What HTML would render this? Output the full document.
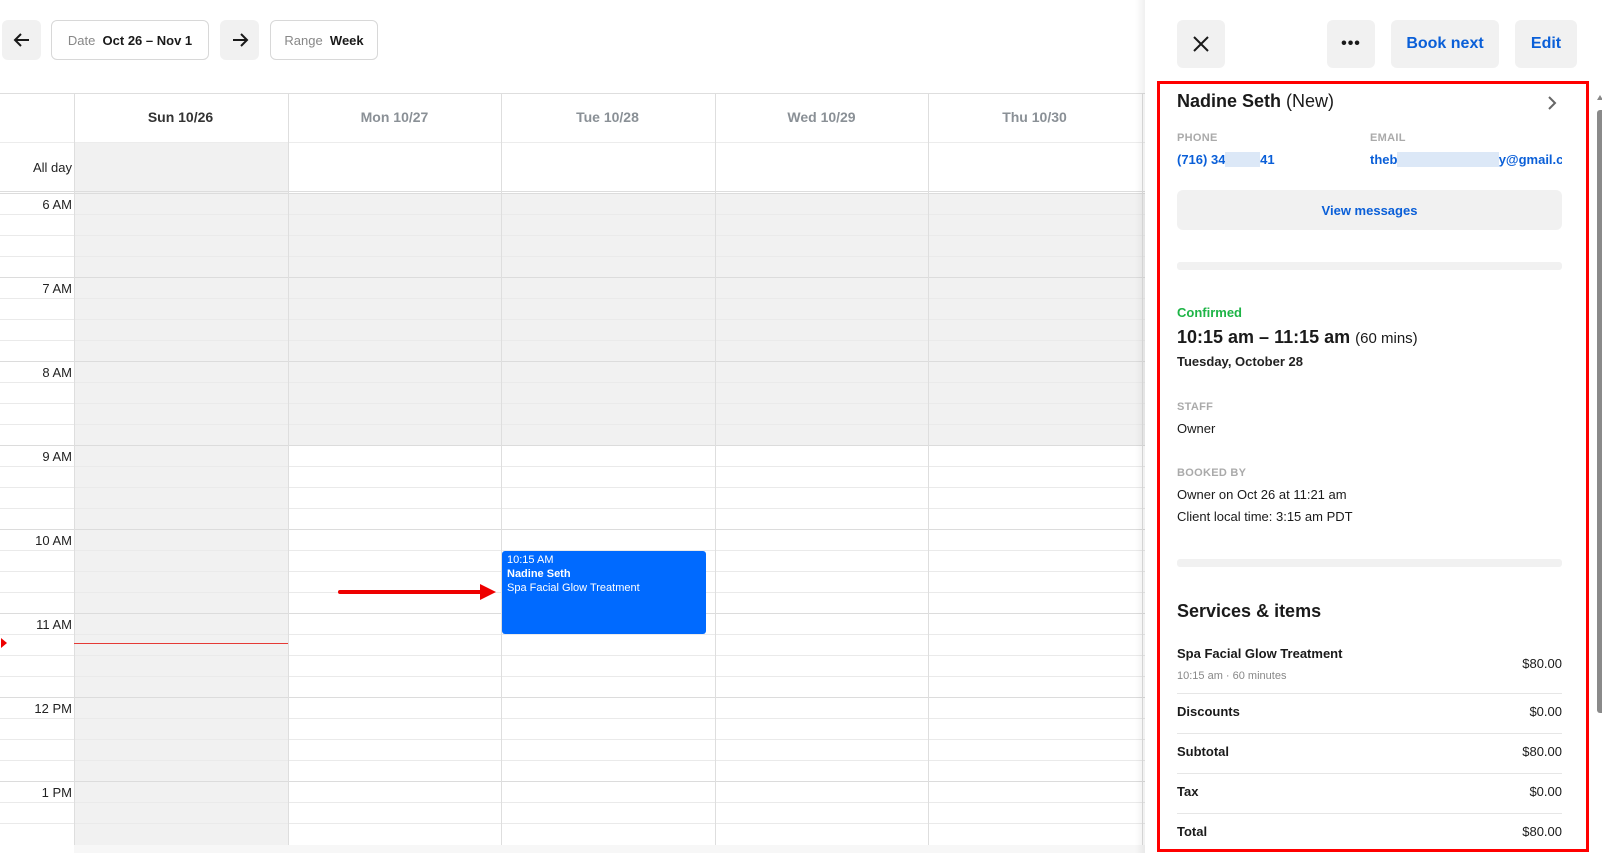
<!DOCTYPE html>
<html><head><meta charset="utf-8">
<style>
*{box-sizing:border-box;margin:0;padding:0}
body{width:1602px;height:853px;overflow:hidden;background:#fff;font-family:"Liberation Sans",Arial,sans-serif;color:#1a1a1a;position:relative}
.abs{position:absolute}
.btn{position:absolute;border-radius:6px;display:flex;align-items:center;justify-content:center}
.gray{background:#f1f1f1}
.outl{border:1px solid #d8d8d8;background:#fff;font-size:13px}
.hl{position:absolute;left:0;height:1px}
.vl{position:absolute;width:1px;background:#dedede}
.tl{position:absolute;right:1530px;font-size:13px;color:#222;text-align:right;width:70px}
.dh{position:absolute;top:93px;height:49px;line-height:49px;text-align:center;font-size:14px;font-weight:bold;color:#8a9096;width:213px}
.lab{position:absolute;left:1177px;font-size:11px;font-weight:bold;color:#aaa;letter-spacing:.3px}
.t13{position:absolute;left:1177px;font-size:13px;color:#1a1a1a}
.row{position:absolute;left:1177px;width:385px;font-size:13px;font-weight:bold;display:flex;justify-content:space-between}
.row span:last-child{font-weight:normal}
.div{position:absolute;left:1177px;width:385px;height:1px;background:#e6e6e6}
</style></head><body>

<!-- toolbar -->
<div class="btn gray" style="left:2px;top:20px;width:39px;height:40px">
<svg width="20" height="20" viewBox="0 0 20 20"><path d="M17 10H3M9 4L3 10l6 6" fill="none" stroke="#1a1a1a" stroke-width="2"/></svg></div>
<div class="btn outl" style="left:51px;top:20px;width:158px;height:40px"><span style="color:#888">Date</span>&nbsp;&nbsp;<b>Oct 26 – Nov 1</b></div>
<div class="btn gray" style="left:220px;top:20px;width:39px;height:40px">
<svg width="20" height="20" viewBox="0 0 20 20"><path d="M3 10h14M11 4l6 6-6 6" fill="none" stroke="#1a1a1a" stroke-width="2"/></svg></div>
<div class="btn outl" style="left:270px;top:20px;width:108px;height:40px"><span style="color:#888">Range</span>&nbsp;&nbsp;<b>Week</b></div>

<!-- grid backgrounds -->
<div class="abs" style="left:74px;top:142px;width:214px;height:703px;background:#f1f1f1"></div>
<div class="abs" style="left:74px;top:193px;width:1071px;height:252px;background:#f1f1f1"></div>
<div class="hl" style="top:93px;width:1145px;background:#dedede"></div>
<div class="hl" style="left:0;top:142px;width:1145px;background:#ececec"></div>
<div class="hl" style="left:0;top:191px;width:1145px;height:3px;border-top:1px solid #ddd;border-bottom:1px solid #ddd"></div>

<div id="lines"></div>
<script>
var h='';
for(var i=0;i<31;i++){var y=193+i*21+(Math.floor(i/4))*0;var yy=Math.round(193+i*21);
h+='<div class="hl" style="top:'+yy+'px;width:1145px;background:'+(i%4==0?'#dcdcdc':'#eaeaea')+'"></div>';}
var labels=['6 AM','7 AM','8 AM','9 AM','10 AM','11 AM','12 PM','1 PM'];
for(var j=0;j<labels.length;j++){h+='<div class="tl" style="top:'+(193+j*84+4)+'px">'+labels[j]+'</div>';}
[74,288,501,715,928,1142].forEach(function(x){h+='<div class="vl" style="left:'+x+'px;top:93px;height:752px"></div>';});
document.getElementById('lines').innerHTML=h;
</script>

<div class="dh" style="left:74px;color:#333">Sun 10/26</div>
<div class="dh" style="left:288px">Mon 10/27</div>
<div class="dh" style="left:501px">Tue 10/28</div>
<div class="dh" style="left:715px">Wed 10/29</div>
<div class="dh" style="left:928px">Thu 10/30</div>
<div class="tl" style="top:160px">All day</div>

<!-- now line -->
<div class="abs" style="left:74px;top:643px;width:214px;height:1px;background:#e53935"></div>
<div class="abs" style="left:1px;top:638px;width:0;height:0;border-top:5px solid transparent;border-bottom:5px solid transparent;border-left:6px solid #e00"></div>

<!-- event -->
<div class="abs" style="left:502px;top:551px;width:204px;height:83px;background:#006aff;border-radius:3px;color:#fff;font-size:11px;line-height:14px;padding:2px 5px">
10:15 AM<br><b>Nadine Seth</b><br>Spa Facial Glow Treatment</div>
<!-- arrow -->
<div class="abs" style="left:338px;top:590px;width:145px;height:4px;background:#e00;border-radius:2px"></div>
<div class="abs" style="left:480px;top:584px;width:0;height:0;border-top:8px solid transparent;border-bottom:8px solid transparent;border-left:16px solid #e00"></div>

<!-- bottom scrollbar -->
<div class="abs" style="left:74px;top:845px;width:1071px;height:8px;background:#f7f7f7"></div>

<!-- panel -->
<div class="abs" style="left:1135px;top:0;width:10px;height:853px;background:linear-gradient(to right,rgba(0,0,0,0),rgba(0,0,0,.06))"></div>
<div class="abs" style="left:1145px;top:0;width:457px;height:853px;background:#fff"></div>
<div class="btn gray" style="left:1177px;top:20px;width:48px;height:48px">
<svg width="18" height="18" viewBox="0 0 18 18"><path d="M2 2l14 14M16 2L2 16" stroke="#1a1a1a" stroke-width="2"/></svg></div>
<div class="btn gray" style="left:1327px;top:20px;width:48px;height:48px;font-size:16px;font-weight:bold;letter-spacing:1px">•••</div>
<div class="btn gray" style="left:1391px;top:20px;width:108px;height:48px;color:#0a5fd8;font-weight:bold;font-size:16px">Book next</div>
<div class="btn gray" style="left:1515px;top:20px;width:62px;height:48px;color:#0a5fd8;font-weight:bold;font-size:16px">Edit</div>

<div class="abs" style="left:1157px;top:81px;width:432px;height:771px;border:3px solid #f00"></div>

<div class="abs" style="left:1177px;top:91px;font-size:18px"><b>Nadine Seth</b> (New)</div>
<svg class="abs" style="left:1546px;top:95px" width="12" height="16" viewBox="0 0 12 16"><path d="M3 2l6 6-6 6" fill="none" stroke="#666" stroke-width="2"/></svg>
<div class="lab" style="top:132px">PHONE</div>
<div class="lab" style="top:132px;left:1370px">EMAIL</div>
<div class="abs" style="left:1177px;top:152px;font-size:13px;font-weight:bold;color:#0a5fd8">(716) 34<span style="background:#dce8f7;color:transparent">XXXX</span>41</div>
<div class="abs" style="left:1370px;top:152px;font-size:13px;font-weight:bold;color:#0a5fd8;width:192px;overflow:hidden;white-space:nowrap">theb<span style="background:#dce8f7;color:transparent">xxxxxxxxxxxxxx</span>y@gmail.com</div>
<div class="btn gray" style="left:1177px;top:190px;width:385px;height:40px;color:#0a5fd8;font-weight:bold;font-size:13px">View messages</div>
<div class="abs" style="left:1177px;top:262px;width:385px;height:8px;background:#f1f1f1;border-radius:3px"></div>

<div class="abs" style="left:1177px;top:305px;font-size:13px;font-weight:bold;color:#1db446">Confirmed</div>
<div class="abs" style="left:1177px;top:327px;font-size:18px"><b>10:15 am – 11:15 am</b> <span style="font-size:15px">(60 mins)</span></div>
<div class="abs" style="left:1177px;top:354px;font-size:13px;font-weight:bold;color:#222">Tuesday, October 28</div>
<div class="lab" style="top:401px">STAFF</div>
<div class="t13" style="top:421px">Owner</div>
<div class="lab" style="top:467px">BOOKED BY</div>
<div class="t13" style="top:487px">Owner on Oct 26 at 11:21 am</div>
<div class="t13" style="top:509px">Client local time: 3:15 am PDT</div>
<div class="abs" style="left:1177px;top:559px;width:385px;height:8px;background:#f1f1f1;border-radius:3px"></div>

<div class="abs" style="left:1177px;top:601px;font-size:18px;font-weight:bold">Services &amp; items</div>
<div class="abs" style="left:1177px;top:646px;font-size:13px;font-weight:bold">Spa Facial Glow Treatment</div>
<div class="abs" style="left:1177px;top:670px;font-size:11px;color:#888">10:15 am · 60 minutes</div>
<div class="abs" style="left:1500px;top:656px;width:62px;text-align:right;font-size:13px">$80.00</div>
<div class="div" style="top:693px"></div>
<div class="row" style="top:704px"><span>Discounts</span><span>$0.00</span></div>
<div class="div" style="top:733px"></div>
<div class="row" style="top:744px"><span>Subtotal</span><span>$80.00</span></div>
<div class="div" style="top:773px"></div>
<div class="row" style="top:784px"><span>Tax</span><span>$0.00</span></div>
<div class="div" style="top:813px"></div>
<div class="row" style="top:824px"><span>Total</span><span>$80.00</span></div>

<!-- panel scrollbar -->
<div class="abs" style="left:1597px;top:95px;width:0;height:0;border-left:3px solid transparent;border-right:3px solid transparent;border-bottom:5px solid #888"></div>
<div class="abs" style="left:1597px;top:110px;width:5px;height:603px;background:#8a8a8a;border-radius:3px 0 0 3px"></div>
</body></html>
